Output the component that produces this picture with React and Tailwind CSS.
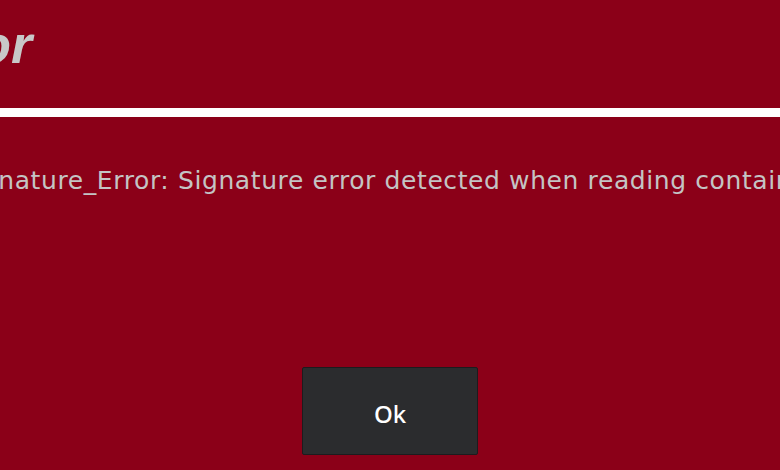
export default function App() {
  return (
    <div className="w-[780px] h-[470px] overflow-hidden bg-[#8b0018]">
      <div className="w-[980px] ml-[-100px] flex flex-col">
        <h1 className="pt-[17px] h-[74px] text-[54px] leading-[54px] font-bold italic text-[#c8c8c8] font-['Liberation_Sans',sans-serif]">
          Error
        </h1>
        <div className="mt-[34px] h-[9px] bg-white" />
        <div className="mt-[48px] flex">
          <p className="ml-[-164px] whitespace-nowrap text-[25px] leading-[32px] tracking-[0.6px] text-[#c4c4c4] font-['DejaVu_Sans',sans-serif]">
            Error: Container_Signature_Error: Signature error detected when reading container data
          </p>
        </div>
        <div className="mt-[170px] flex justify-center">
          <button className="w-[176px] h-[88px] pt-[6px] rounded-[2px] border border-[#1c1c1e] bg-[#2b2c2e] text-white text-[24px] font-medium font-['Noto_Sans',sans-serif]">
            Ok
          </button>
        </div>
      </div>
    </div>
  )
}
